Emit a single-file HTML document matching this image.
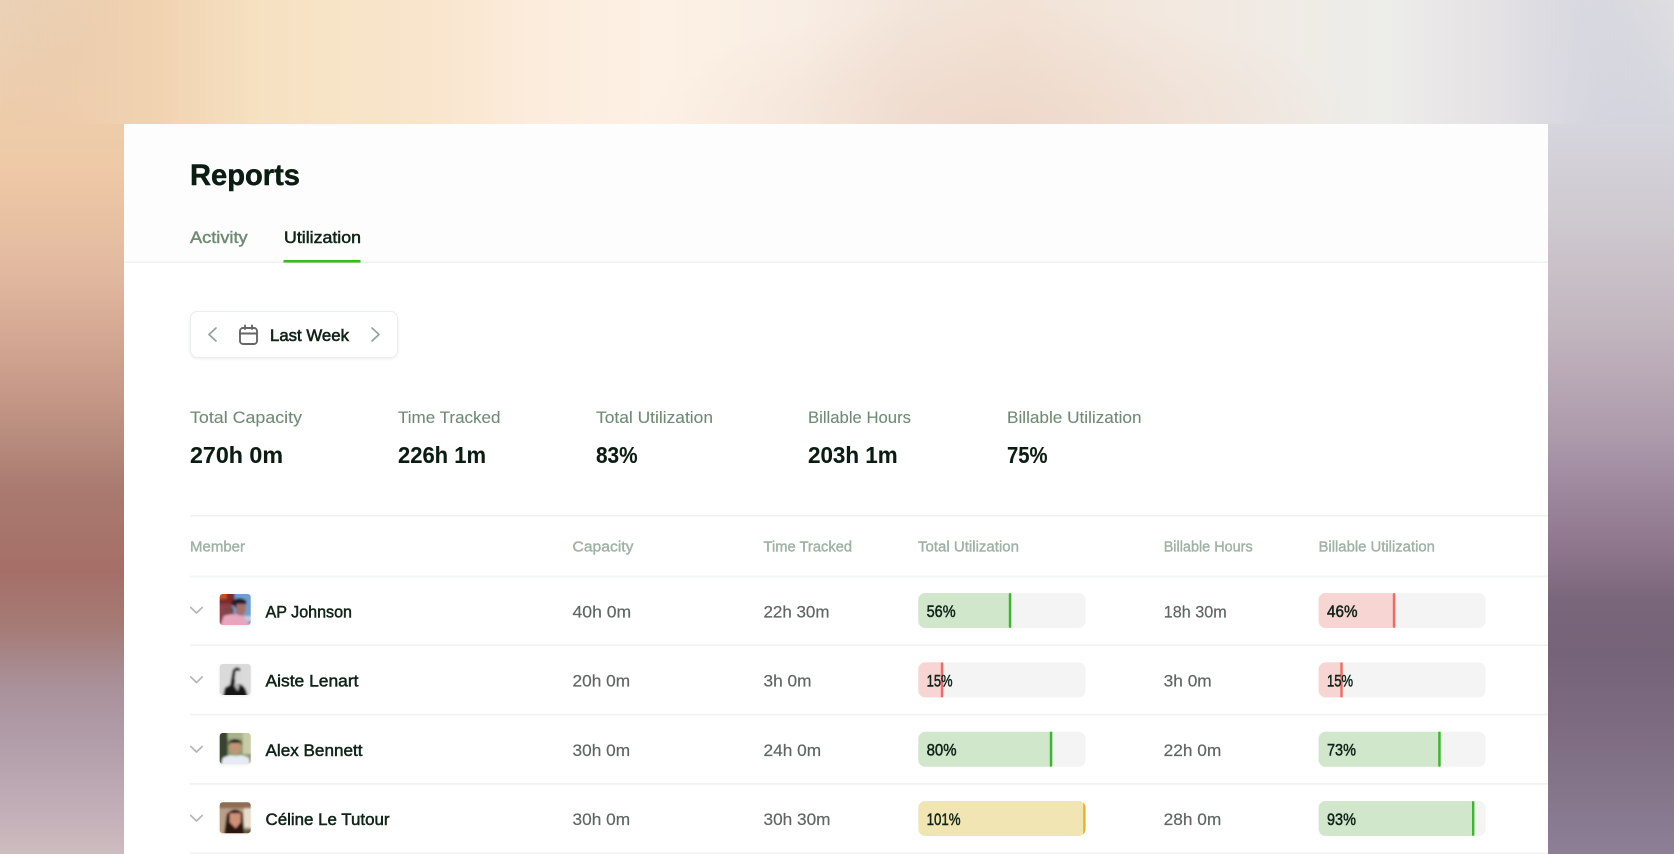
<!DOCTYPE html>
<html lang="en"><head><meta charset="utf-8"><title>Reports</title>
<style>
html,body{margin:0;padding:0;width:1674px;height:854px;overflow:hidden;background:#fff}
.bg{position:absolute}
#l{left:0;top:0;width:124px;height:854px;background:linear-gradient(180deg,#ebd3b8 0,#efcaa6 163px,#e2b9a0 272px,#d0a390 354px,#b98d7e 436px,#a97a70 490px,#a56f68 572px,#a57b75 626px,#a88f97 680px,#b09ca8 735px,#c4b0b8 817px,#cdbcc0 854px)}
#r{left:1548px;top:0;width:126px;height:854px;background:linear-gradient(180deg,#e0dfe2 0,#d7d8df 109px,#cfc9d0 218px,#c2b6bf 327px,#ad9aab 436px,#9d889e 490px,#8f788e 545px,#7a667a 600px,#756379 654px,#7e6d82 735px,#8c7f96 854px)}
#t{left:0;top:0;width:1674px;height:124px;background:radial-gradient(ellipse 360px 120px at 1000px 124px,rgba(235,208,192,.55),rgba(235,208,192,0)),linear-gradient(90deg,#e8c8a8 0,#f1d3b2 160px,#f6e2c2 267px,#f9e5cc 427px,#fcecdc 534px,#fdf1e5 662px,#f9eee4 800px,#f3e5da 907px,#f2e2d5 1014px,#f3e9e0 1174px,#ededea 1388px,#e4e2e4 1495px,#d3d4de 1601px,#c9ccd9 1674px);-webkit-mask-image:linear-gradient(90deg,transparent 0,#000 124px,#000 1548px,transparent 1674px);mask-image:linear-gradient(90deg,transparent 0,#000 124px,#000 1548px,transparent 1674px)}
#c{left:124px;top:124px;width:1424px;height:730px;background:#fff}
#h{left:124px;top:124px;width:1424px;height:138px;background:#fdfdfd}
svg{position:absolute;left:0;top:0}
text{font-family:"Liberation Sans",sans-serif;font-size:17px;stroke-width:.35px;paint-order:stroke}
.d{fill:#0f2318;stroke:#0f2318;stroke-width:.5px}
.s{fill:#6f8b74;stroke:#6f8b74;stroke-width:.1px}
.g{fill:#5f6662;stroke:#5f6662;stroke-width:.2px}
.m{font-size:15px;fill:#9fb2a6;stroke:#9fb2a6;stroke-width:.4px}
.v{font-size:23.5px;font-weight:bold;fill:#0b1d13;stroke:#0b1d13;stroke-width:.1px}
.ln{fill:#f0f2f1}
.ch{fill:none;stroke:#b5b9b7;stroke-width:1.8;stroke-linecap:round;stroke-linejoin:round}
.nv{fill:none;stroke:#8fa498;stroke-width:1.7;stroke-linecap:round;stroke-linejoin:round}
</style></head><body>
<div class="bg" id="l"></div><div class="bg" id="r"></div><div class="bg" id="t"></div>
<div class="bg" id="c"></div><div class="bg" id="h"></div>
<svg width="1674" height="854" viewBox="0 0 1674 854" xmlns="http://www.w3.org/2000/svg">
<defs>
<filter id="b" x="-10%" y="-10%" width="120%" height="120%"><feGaussianBlur stdDeviation="1"/></filter>
<filter id="sh" x="-20%" y="-20%" width="140%" height="140%"><feDropShadow dx="0" dy="1" stdDeviation="1.2" flood-color="#000" flood-opacity=".07"/></filter>
<clipPath id="av"><rect width="31" height="31" rx="3"/></clipPath>
</defs>

<text x="190" y="185" textLength="110" lengthAdjust="spacingAndGlyphs" style="font-size:30px;font-weight:bold;fill:#0b1d13;stroke:#0b1d13;stroke-width:.5px">Reports</text>
<text x="190" y="243" textLength="57.6" lengthAdjust="spacingAndGlyphs" class="s" style="stroke-width:.45px">Activity</text>
<text x="284" y="243" textLength="77" lengthAdjust="spacingAndGlyphs" class="d">Utilization</text>
<rect x="124" y="261.5" width="1424" height="1.5" class="ln"/>
<rect x="283.5" y="260" width="77" height="2.6" fill="#3cb81f"/>

<rect x="190.5" y="311.5" width="207" height="46" rx="7" fill="#fff" stroke="#e9edeb" filter="url(#sh)"/>
<polyline class="nv" points="216,328 209,334.5 216,341"/>
<polyline class="nv" points="372,328 379,334.5 372,341"/>
<g fill="none" stroke="#666" stroke-width="1.9" stroke-linecap="round"><rect x="240" y="328" width="17" height="16" rx="3"/><path d="M240 333.5H257M245 325.5V329M252 325.5V329"/></g>
<text x="270" y="341" textLength="79" lengthAdjust="spacingAndGlyphs" class="d" style="stroke-width:.6px">Last Week</text>

<text x="190" y="423" textLength="112" lengthAdjust="spacingAndGlyphs" class="s">Total Capacity</text>
<text x="398" y="423" textLength="102.5" lengthAdjust="spacingAndGlyphs" class="s">Time Tracked</text>
<text x="596" y="423" textLength="117" lengthAdjust="spacingAndGlyphs" class="s">Total Utilization</text>
<text x="808" y="423" textLength="103" lengthAdjust="spacingAndGlyphs" class="s">Billable Hours</text>
<text x="1007" y="423" textLength="134.5" lengthAdjust="spacingAndGlyphs" class="s">Billable Utilization</text>
<text x="190" y="463" textLength="93" lengthAdjust="spacingAndGlyphs" class="v">270h 0m</text>
<text x="398" y="463" textLength="88" lengthAdjust="spacingAndGlyphs" class="v">226h 1m</text>
<text x="596" y="463" textLength="41.6" lengthAdjust="spacingAndGlyphs" class="v">83%</text>
<text x="808" y="463" textLength="89.7" lengthAdjust="spacingAndGlyphs" class="v">203h 1m</text>
<text x="1007" y="463" textLength="40.6" lengthAdjust="spacingAndGlyphs" class="v">75%</text>

<rect x="190" y="515" width="1358" height="1.5" class="ln"/>
<text x="190" y="551.5" textLength="55" lengthAdjust="spacingAndGlyphs" class="m">Member</text>
<text x="572.5" y="551.5" textLength="61" lengthAdjust="spacingAndGlyphs" class="m">Capacity</text>
<text x="763.5" y="551.5" textLength="88.6" lengthAdjust="spacingAndGlyphs" class="m">Time Tracked</text>
<text x="918" y="551.5" textLength="101" lengthAdjust="spacingAndGlyphs" class="m">Total Utilization</text>
<text x="1163.7" y="551.5" textLength="89" lengthAdjust="spacingAndGlyphs" class="m">Billable Hours</text>
<text x="1318.5" y="551.5" textLength="116.4" lengthAdjust="spacingAndGlyphs" class="m">Billable Utilization</text>
<rect x="190" y="575.5" width="1358" height="2" fill="#f3f5f4"/>
<rect x="190" y="644.5" width="1358" height="1.5" class="ln"/>
<rect x="190" y="713.8" width="1358" height="1.5" class="ln"/>
<rect x="190" y="783" width="1358" height="1.8" class="ln"/>
<rect x="190" y="852.5" width="1358" height="1.5" class="ln"/>

<!-- chevrons -->
<polyline class="ch" points="190.8,607.5 196.5,613 202.2,607.5"/>
<polyline class="ch" points="190.8,677 196.5,682.5 202.2,677"/>
<polyline class="ch" points="190.8,746.5 196.5,752 202.2,746.5"/>
<polyline class="ch" points="190.8,815.5 196.5,821 202.2,815.5"/>

<!-- avatars -->
<g transform="translate(219.7,594)"><rect width="31" height="31" rx="3" fill="#fff" filter="url(#sh)"/><g clip-path="url(#av)"><g filter="url(#b)">
<rect x="-3" y="-3" width="37" height="37" fill="#6f9fd4"/><path d="M-3 -3H15V12H-3Z" fill="#7d2a2c"/><path d="M-3 10H12V34H-3Z" fill="#8e3f4c"/><path d="M-3 -3H7V5H-3Z" fill="#c8502a"/>
<path d="M24 22H34V27H24Z" fill="#c3cfdc"/><path d="M11 8Q19 1 27 7L26 12L17 15Z" fill="#1c1a2c"/><path d="M17 10H26L26 18L21 23L16 19Z" fill="#a66f68"/><path d="M6 13Q11 10 14 15L14 22L6 22Z" fill="#7a4444"/>
<path d="M0 34L4 22Q14 18 25 23L31 34Z" fill="#e7a6bd"/></g></g></g>
<g transform="translate(219.7,664)"><rect width="31" height="31" rx="3" fill="#fff" filter="url(#sh)"/><g clip-path="url(#av)"><g filter="url(#b)">
<rect x="-3" y="-3" width="37" height="37" fill="#dadada"/><path d="M10 22L13 6Q17 1 21 5L20 9L16 11L15 22Z" fill="#1f1f1f"/><path d="M16 7H22L22 16L18 19L15 15Z" fill="#d8d8d8"/>
<path d="M3 34L5 24Q12 19 16 21L20 20Q27 22 28 34Z" fill="#151515"/><path d="M14 21L18 27L20 21Z" fill="#b5b5b5"/></g></g></g>
<g transform="translate(219.7,733)"><rect width="31" height="31" rx="3" fill="#fff" filter="url(#sh)"/><g clip-path="url(#av)"><g filter="url(#b)">
<rect x="-3" y="-3" width="37" height="37" fill="#8f9a6d"/><rect x="-3" y="-3" width="11" height="37" fill="#39432e"/><rect x="23" y="-3" width="11" height="24" fill="#c8cca6"/><rect x="8" y="-3" width="15" height="9" fill="#a8b38e"/>
<path d="M9 9Q15 3 22 9L22 12H9Z" fill="#221f1a"/><path d="M10 10H21V18L16 22L10 18Z" fill="#c09676"/>
<path d="M1 34L3 25Q10 21 16 23Q23 21 29 25L31 34Z" fill="#e6eaf3"/></g></g></g>
<g transform="translate(219.7,802.3)"><rect width="31" height="31" rx="3" fill="#fff" filter="url(#sh)"/><g clip-path="url(#av)"><g filter="url(#b)">
<rect x="-3" y="-3" width="37" height="37" fill="#b99f86"/><rect x="-3" y="-3" width="37" height="9" fill="#8e6d52"/><rect x="24" y="6" width="10" height="19" fill="#e8ddcc"/>
<path d="M4 34L7 12Q15 3 23 11L25 34Z" fill="#2a1510"/><path d="M10 11H21V20L16 26L10 20Z" fill="#d09078"/><path d="M25 27H34V34H25Z" fill="#55603a"/></g></g></g>

<!-- names -->
<text x="265.5" y="617.3" textLength="86.5" lengthAdjust="spacingAndGlyphs" class="d">AP Johnson</text>
<text x="265.5" y="686.7" textLength="93" lengthAdjust="spacingAndGlyphs" class="d">Aiste Lenart</text>
<text x="265.5" y="756" textLength="97" lengthAdjust="spacingAndGlyphs" class="d">Alex Bennett</text>
<text x="265.5" y="825" textLength="124" lengthAdjust="spacingAndGlyphs" class="d">Céline Le Tutour</text>

<text x="572.5" y="617.3" textLength="58.7" lengthAdjust="spacingAndGlyphs" class="g">40h 0m</text>
<text x="572.5" y="686.7" textLength="57.6" lengthAdjust="spacingAndGlyphs" class="g">20h 0m</text>
<text x="572.5" y="756" textLength="57.6" lengthAdjust="spacingAndGlyphs" class="g">30h 0m</text>
<text x="572.5" y="825" textLength="57.6" lengthAdjust="spacingAndGlyphs" class="g">30h 0m</text>

<text x="763.5" y="617.3" textLength="66" lengthAdjust="spacingAndGlyphs" class="g">22h 30m</text>
<text x="763.5" y="686.7" textLength="48" lengthAdjust="spacingAndGlyphs" class="g">3h 0m</text>
<text x="763.5" y="756" textLength="57.6" lengthAdjust="spacingAndGlyphs" class="g">24h 0m</text>
<text x="763.5" y="825" textLength="67" lengthAdjust="spacingAndGlyphs" class="g">30h 30m</text>

<text x="1163.7" y="617.3" textLength="63" lengthAdjust="spacingAndGlyphs" class="g">18h 30m</text>
<text x="1163.7" y="686.7" textLength="48" lengthAdjust="spacingAndGlyphs" class="g">3h 0m</text>
<text x="1163.7" y="756" textLength="57.6" lengthAdjust="spacingAndGlyphs" class="g">22h 0m</text>
<text x="1163.7" y="825" textLength="57.6" lengthAdjust="spacingAndGlyphs" class="g">28h 0m</text>

<defs>
<clipPath id="c1"><rect x="918.3" y="593" width="167.3" height="35" rx="7"/></clipPath>
<clipPath id="c2"><rect x="918.3" y="662.4" width="167.3" height="35" rx="7"/></clipPath>
<clipPath id="c3"><rect x="918.3" y="731.8" width="167.3" height="35" rx="7"/></clipPath>
<clipPath id="c4"><rect x="918.3" y="801" width="167.3" height="35" rx="7"/></clipPath>
<clipPath id="d1"><rect x="1318.6" y="593" width="167" height="35" rx="7"/></clipPath>
<clipPath id="d2"><rect x="1318.6" y="662.4" width="167" height="35" rx="7"/></clipPath>
<clipPath id="d3"><rect x="1318.6" y="731.8" width="167" height="35" rx="7"/></clipPath>
<clipPath id="d4"><rect x="1318.6" y="801" width="167" height="35" rx="7"/></clipPath>
</defs>

<g clip-path="url(#c1)"><rect x="918" y="593" width="168" height="35" fill="#f4f4f4"/><rect x="918" y="593" width="91" height="35" fill="#d1e7cb"/><rect x="1008.8" y="593" width="2.5" height="35" rx="1.2" fill="#3cb62d"/></g>
<g clip-path="url(#c2)"><rect x="918" y="662" width="168" height="36" fill="#f4f4f4"/><rect x="918" y="662" width="23" height="36" fill="#f6d5d3"/><rect x="940.8" y="662" width="2.5" height="36" rx="1.2" fill="#f06a66"/></g>
<g clip-path="url(#c3)"><rect x="918" y="731" width="168" height="36" fill="#f4f4f4"/><rect x="918" y="731" width="132" height="36" fill="#d1e7cb"/><rect x="1049.8" y="731" width="2.5" height="36" rx="1.2" fill="#3cb62d"/></g>
<g clip-path="url(#c4)"><rect x="918" y="801" width="168" height="35" fill="#f0e5b3"/><rect x="1083.2" y="801" width="2.5" height="35" fill="#dcb62e"/></g>

<g clip-path="url(#d1)"><rect x="1318" y="593" width="168" height="35" fill="#f4f4f4"/><rect x="1318" y="593" width="75" height="35" fill="#f6d5d3"/><rect x="1392.8" y="593" width="2.5" height="35" rx="1.2" fill="#f06a66"/></g>
<g clip-path="url(#d2)"><rect x="1318" y="662" width="168" height="36" fill="#f4f4f4"/><rect x="1318" y="662" width="23" height="36" fill="#f6d5d3"/><rect x="1340.3" y="662" width="2.4" height="36" rx="1.2" fill="#f06a66"/></g>
<g clip-path="url(#d3)"><rect x="1318" y="731" width="168" height="36" fill="#f4f4f4"/><rect x="1318" y="731" width="120.5" height="36" fill="#d1e7cb"/><rect x="1438.2" y="731" width="2.5" height="36" rx="1.2" fill="#3cb62d"/></g>
<g clip-path="url(#d4)"><rect x="1318" y="801" width="168" height="35" fill="#f4f4f4"/><rect x="1318" y="801" width="154.5" height="35" fill="#d1e7cb"/><rect x="1472" y="801" width="2.4" height="35" rx="1.2" fill="#3cb62d"/></g>

<text x="926.6" y="617" textLength="29" lengthAdjust="spacingAndGlyphs" class="d">56%</text>
<text x="926.6" y="686.4" textLength="26" lengthAdjust="spacingAndGlyphs" class="d">15%</text>
<text x="926.6" y="755.7" textLength="30" lengthAdjust="spacingAndGlyphs" class="d">80%</text>
<text x="926.6" y="825" textLength="34" lengthAdjust="spacingAndGlyphs" class="d">101%</text>
<text x="1327" y="617" textLength="30.5" lengthAdjust="spacingAndGlyphs" class="d">46%</text>
<text x="1327" y="686.4" textLength="26" lengthAdjust="spacingAndGlyphs" class="d">15%</text>
<text x="1327" y="755.7" textLength="29" lengthAdjust="spacingAndGlyphs" class="d">73%</text>
<text x="1327" y="825" textLength="29" lengthAdjust="spacingAndGlyphs" class="d">93%</text>
</svg>
</body></html>
